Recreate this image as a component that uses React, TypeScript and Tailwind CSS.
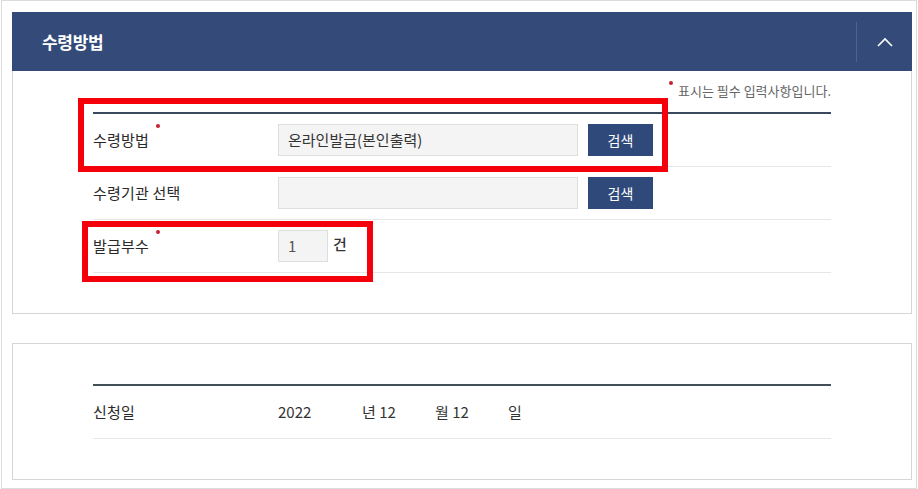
import React from 'react';

const RequiredDot = () => (
  <span className="absolute left-full top-[-5px] ml-[7px] h-[4px] w-[4px] rounded-full bg-[#c8202f]" />
);

interface FieldRowProps {
  label: string;
  required?: boolean;
  children?: React.ReactNode;
}

const FieldRow: React.FC<FieldRowProps> = ({ label, required, children }) => (
  <div className="flex h-[53px] items-center border-b border-[#e6e6e6]">
    <div className="w-[185px] text-[15px] leading-[20px] tracking-[0.2px] text-[#2a2a2a]">
      <span className="relative">
        {label}
        {required && <RequiredDot />}
      </span>
    </div>
    {children}
  </div>
);

const SearchButton = () => (
  <button className="ml-[10px] h-[32px] w-[65px] bg-[#2f4a7a] text-[14px] text-white">
    검색
  </button>
);

export default function App() {
  return (
    <div className="relative h-[489px] w-[918px] bg-white font-['Noto_Sans_CJK_KR',sans-serif]">
      <div className="ml-px h-[489px] w-[916px] border border-[#dcdcdc] pl-[10px] pt-[11px]">
        {/* 수령방법 panel */}
        <div className="w-[900px]">
          <div className="flex h-[59px] items-center bg-[#344b79]">
            <h2 className="flex-1 pl-[30px] text-[17px] font-bold tracking-[-0.3px] text-white">
              수령방법
            </h2>
            <div className="h-[40px] w-px bg-[#4c6291]" />
            <button className="flex h-full w-[55px] items-center justify-center">
              <svg width="16" height="10" viewBox="0 0 16 10" fill="none">
                <polyline points="1,9 8,2 15,9" stroke="white" strokeWidth="1.6" />
              </svg>
            </button>
          </div>
          <div className="border-x border-b border-[#d6d6d6] px-[80px] pb-[40px] pt-[11px]">
            <div className="flex justify-end">
              <span className="relative text-[13px] leading-[18px] text-[#666]">
                <span className="absolute left-[-9px] top-[-1px] h-[4px] w-[4px] rounded-full bg-[#c8202f]" />
                표시는 필수 입력사항입니다.
              </span>
            </div>
            <div className="mt-[12px] border-t-2 border-[#3a4960]">
              <FieldRow label="수령방법" required>
                <div className="flex h-[32px] w-[300px] items-center border border-[#dedede] bg-[#f4f4f4] pl-[9px] text-[15px] text-[#333]">
                  온라인발급(본인출력)
                </div>
                <SearchButton />
              </FieldRow>
              <FieldRow label="수령기관 선택">
                <div className="h-[32px] w-[300px] border border-[#dedede] bg-[#f4f4f4]" />
                <SearchButton />
              </FieldRow>
              <FieldRow label="발급부수" required>
                <div className="flex h-[32px] w-[50px] items-center border border-[#dedede] bg-[#f4f4f4] pl-[9px] text-[15px] text-[#555]">
                  1
                </div>
                <span className="ml-[5px] mb-[3px] text-[15px] font-medium text-[#333]">건</span>
              </FieldRow>
            </div>
          </div>
        </div>

        {/* 신청일 panel */}
        <div className="mt-[29px] w-[900px] border border-[#d6d6d6] px-[80px] pb-[40px] pt-[40px]">
          <div className="border-t-2 border-[#414f57]">
            <FieldRow label="신청일">
              <div className="flex text-[15px] text-[#333]">
                <span className="w-[84px]">2022</span>
                <span className="w-[73px]">년 12</span>
                <span className="w-[73px]">월 12</span>
                <span>일</span>
              </div>
            </FieldRow>
          </div>
        </div>
      </div>

      {/* annotation boxes */}
      <div className="absolute left-[78px] top-[98px] h-[74px] w-[590px] border-[6px] border-[#f5000a]" />
      <div className="absolute left-[82px] top-[221px] h-[61px] w-[291px] border-[6px] border-[#f5000a]" />
    </div>
  );
}
